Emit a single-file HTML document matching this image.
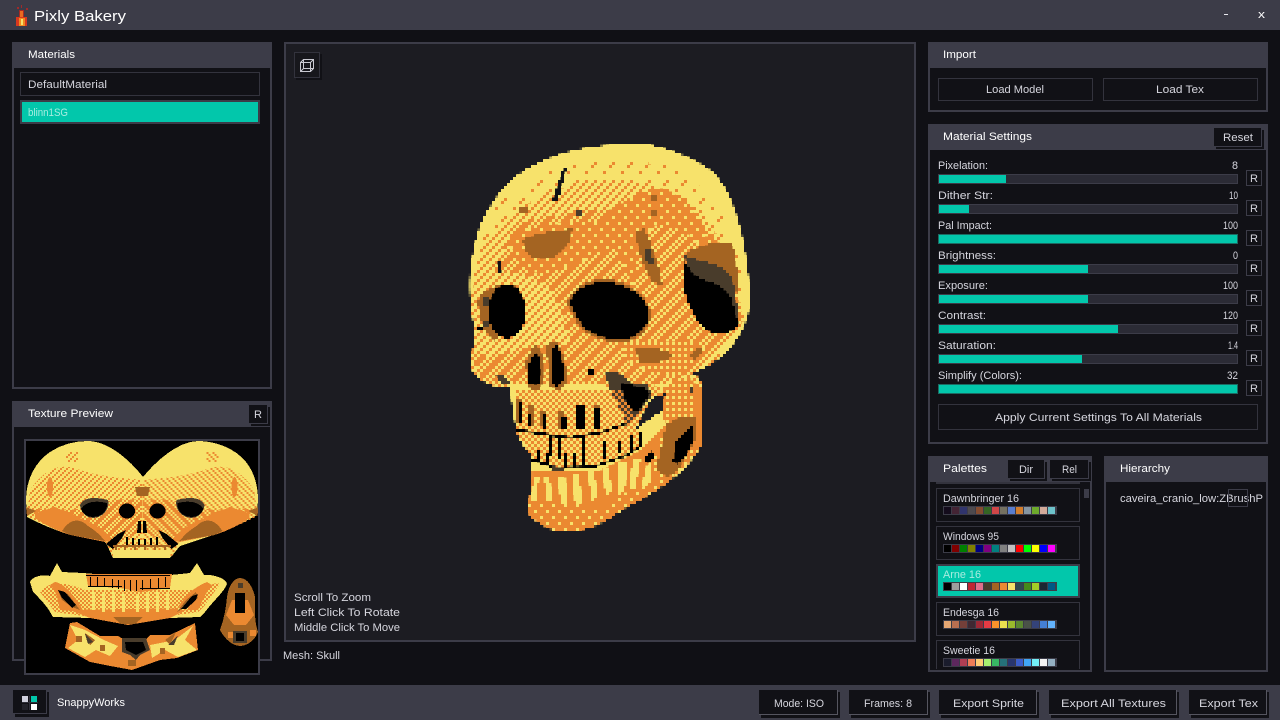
<!DOCTYPE html>
<html><head><meta charset="utf-8"><title>Pixly Bakery</title>
<style>
html,body{margin:0;padding:0;background:#101015;width:1280px;height:720px;overflow:hidden}
svg{display:block}
text{font-family:"Liberation Sans",sans-serif;font-size:11px;fill:#d6d6de}
.h{fill:#fff}
rect{shape-rendering:crispEdges}
.sk path,.sk polygon,.sk ellipse{shape-rendering:crispEdges}
</style></head><body>
<svg width="1280" height="720" viewBox="0 0 1280 720" xmlns="http://www.w3.org/2000/svg">
<defs>
<filter id="px" filterUnits="userSpaceOnUse" x="459" y="129" width="300" height="411" color-interpolation-filters="sRGB">
<feFlood x="460" y="130" width="1" height="1" flood-color="#000"/>
<feComposite x="459" y="129" width="3" height="3"/>
<feTile x="459" y="129" width="300" height="411" result="a"/>
<feComposite in="SourceGraphic" in2="a" operator="in"/>
<feMorphology operator="dilate" radius="1"/>
</filter>
<pattern id="p0" width="18" height="18" patternUnits="userSpaceOnUse"><rect width="3" height="3" fill="#eb8931"/><rect x="9" y="9" width="3" height="3" fill="#eb8931"/><rect x="15" y="3" width="3" height="3" fill="#eb8931"/></pattern>
<pattern id="p1" width="9" height="9" patternUnits="userSpaceOnUse"><rect width="3" height="3" fill="#eb8931"/><rect x="6" y="3" width="3" height="3" fill="#eb8931"/><rect x="3" y="6" width="3" height="3" fill="#eb8931"/></pattern>
<pattern id="p2" width="6" height="6" patternUnits="userSpaceOnUse"><rect width="3" height="3" fill="#eb8931"/><rect x="3" y="3" width="3" height="3" fill="#eb8931"/></pattern>
<pattern id="p3" width="6" height="6" patternUnits="userSpaceOnUse"><rect width="6" height="6" fill="#eb8931"/><rect width="3" height="3" fill="#f7e26b"/></pattern>
<pattern id="p4" width="12" height="12" patternUnits="userSpaceOnUse"><rect width="12" height="12" fill="#eb8931"/><rect width="3" height="3" fill="#f7e26b"/><rect x="6" y="6" width="3" height="3" fill="#f7e26b"/></pattern>
<pattern id="t2" width="4" height="4" patternUnits="userSpaceOnUse"><rect width="2" height="2" fill="#eb8931"/><rect x="2" y="2" width="2" height="2" fill="#eb8931"/></pattern>
<pattern id="t1" width="6" height="6" patternUnits="userSpaceOnUse"><rect width="2" height="2" fill="#eb8931"/><rect x="4" y="2" width="2" height="2" fill="#eb8931"/><rect x="2" y="4" width="2" height="2" fill="#eb8931"/></pattern>
<clipPath id="skc"><path d="M640,143 C660,146 690,155 710,170 C725,182 735,205 742,235 C748,265 752,295 748,315 C740,340 725,358 700,370 C692,373 685,377 679,382 L688,376 C695,372 702,378 703,390 L703,440 C698,456 682,472 667,483 C650,495 640,500 627,507 C610,518 600,525 590,528 C575,532 560,532 553,530 C540,525 530,518 527,510 C530,495 533,480 532,470 L530,453 C522,445 518,438 517,433 L513,413 L510,388 C495,388 482,384 472,370 C468,362 475,345 475,330 C470,310 468,285 471,265 C475,240 480,220 490,207 C500,190 512,178 525,170 C550,155 580,147 610,145 Z"/></clipPath>
<clipPath id="tc"><rect x="26" y="441" width="232" height="232"/></clipPath>
<clipPath id="palc"><rect x="930" y="482" width="160" height="187"/></clipPath>
</defs>

<!-- title bar -->
<rect width="1280" height="720" fill="#101015"/>
<rect width="1280" height="30" fill="#3c3c48"/>
<rect x="19" y="10" width="5" height="7" fill="#a82a22"/><rect x="20" y="11" width="3" height="6" fill="#e86a20"/>
<rect x="16" y="17" width="11" height="9" fill="#d8381e"/><rect x="19" y="18" width="6" height="8" fill="#f08a20"/><rect x="21" y="19" width="2" height="6" fill="#f7e26b"/>
<rect x="17" y="7" width="2" height="2" fill="#a02a2a"/><rect x="21" y="5" width="1" height="3" fill="#a02a2a"/><rect x="26" y="8" width="2" height="2" fill="#a02a2a"/>
<text x="34" y="21" class="h" style="font-size:15px" textLength="92" lengthAdjust="spacingAndGlyphs">Pixly Bakery</text>
<rect x="1224" y="14" width="4" height="1" fill="#e8e8ee"/>
<text x="1258" y="18" class="h" textLength="7" lengthAdjust="spacingAndGlyphs">x</text>

<!-- Materials -->
<rect x="12" y="42" width="260" height="347" fill="#3c3c48"/><rect x="14" y="68" width="256" height="319" fill="#111116"/>
<text x="28" y="58" class="h" textLength="47" lengthAdjust="spacingAndGlyphs">Materials</text>
<rect x="20" y="72" width="240" height="24" fill="#33333d"/><rect x="21" y="73" width="238" height="22" fill="#111116"/>
<text x="28" y="88" textLength="79" lengthAdjust="spacingAndGlyphs">DefaultMaterial</text>
<rect x="20" y="100" width="240" height="24" fill="#3c3c48"/><rect x="22" y="102" width="236" height="20" fill="#02c7ab"/>
<text x="28" y="116" style="fill:#a8ece0" textLength="40" lengthAdjust="spacingAndGlyphs">blinn1SG</text>

<!-- Texture Preview panel -->
<rect x="12" y="401" width="260" height="260" fill="#3c3c48"/><rect x="14" y="427" width="256" height="232" fill="#111116"/>
<text x="28" y="417" class="h" textLength="85" lengthAdjust="spacingAndGlyphs">Texture Preview</text>
<rect x="251" y="407" width="19" height="19" fill="#111116"/><rect x="249" y="405" width="19" height="19" fill="#111116"/><rect x="267" y="405" width="1" height="19" fill="#3c3c48"/><rect x="249" y="423" width="19" height="1" fill="#3c3c48"/>
<text x="254" y="418" textLength="8" lengthAdjust="spacingAndGlyphs">R</text>
<rect x="24" y="439" width="236" height="236" fill="#3c3c48"/><rect x="26" y="441" width="232" height="232" fill="#000"/>
<g class="sk" clip-path="url(#tc)">
<path d="M26,500 C26,480 35,462 50,452 C62,444 75,441 88,441 C108,441 130,460 143,477 C155,462 178,441 198,441 C215,441 235,448 246,462 C254,472 258,485 258,500 L257,515 C240,525 225,530 213,535 L180,546 C175,552 172,556 170,558 L113,558 C110,552 108,546 105,542 L70,535 C55,530 40,524 27,517 Z" fill="#f7e26b"/>
<g id="tl">
<path d="M30,490 C45,468 62,462 80,470 C105,478 125,478 142,480 L142,558 L113,558 L105,542 L70,535 L27,517Z M66,452h12v10h-12z" fill="url(#t1)"/>
<path d="M30,510 C50,505 70,515 90,505 C110,500 125,498 142,500 L142,530 L113,546 L105,542 L70,535Z" fill="url(#t2)"/>
<ellipse cx="50" cy="487" rx="3" ry="10" fill="#eb8931"/>
<path d="M35,514 C50,505 65,508 80,518 C95,524 105,530 113,540 L105,542 L70,535 C55,530 45,525 35,518Z" fill="#eb8931"/>
<path d="M62,531 C70,518 80,518 88,526 C95,530 100,535 105,541 L70,535Z" fill="#a46422"/>
<ellipse cx="54" cy="512" rx="6" ry="5" fill="#eb8931"/>
<path d="M26,507 L36,511 L27,516Z" fill="#a46422"/>
<path d="M80,505 C83,498 92,496 108,500 C110,508 104,517 94,518 C87,518 81,514 80,505Z" fill="#493c2b"/>
<path d="M81,509 C85,502 95,500 107,503 C108,510 102,517 93,517 C87,517 83,514 81,509Z" fill="#000"/>
<ellipse cx="127" cy="511" rx="9" ry="8" fill="#eb8931"/>
<ellipse cx="127" cy="511" rx="8" ry="7.5" fill="#000"/>
<path d="M106,544 L118,534 L126,530 L122,538 L113,549Z" fill="#000"/>
</g>
<use href="#tl" transform="translate(284.5) scale(-1,1)"/>
<path d="M135,487 L150,487 L148,496 L137,496Z" fill="#a46422"/>
<path d="M138,521 L141,521 L141,533 L137,533Z M143,521 L146,521 L147,533 L143,533Z" fill="#000"/>
<path d="M126,537h2v8h-2zM132,538h2v7h-2zM138,539h2v6h-2zM144,539h2v6h-2zM150,538h2v7h-2zM156,537h2v8h-2z" fill="#000"/>
<path d="M113,545h58v2h-58zM115,547h2v3h-2zM124,547h2v3h-2zM134,547h2v3h-2zM144,547h2v3h-2zM154,547h2v3h-2zM164,547h2v3h-2z" fill="#a46422"/>
<path d="M113,550 L171,550 L170,558 L113,558Z" fill="#f7e26b"/>
<!-- mandible -->
<path d="M30,582 C32,576 45,574 50,576 L57,563 L62,572 L83,573 L142,578 L190,573 L197,563 L204,575 C212,574 226,578 227,584 C224,592 214,600 205,612 L200,617 L170,618 L128,625 L90,618 L53,617 C47,605 38,597 33,592Z" fill="#f7e26b"/>
<path d="M40,592 C50,580 65,582 85,590 L200,590 C210,585 215,582 220,584 L205,605 L198,612 L128,622 L55,612Z" fill="url(#t2)"/>
<path d="M55,582 C60,582 72,590 84,612 L60,610 C58,600 56,590 50,585Z M207,582 C200,585 188,590 176,610 L198,610 C203,600 207,590 212,585Z M70,610 L190,608 L170,618 L128,625 L90,618Z" fill="#eb8931"/>
<path d="M58,590 L68,594 L80,610 L72,607 L62,600Z M196,592 L186,600 L177,612 L188,606 L198,598Z M113,617h30l-8,7h-14z" fill="#a46422"/>
<path d="M58,590 L65,592 L76,605 L72,608 L62,598Z M198,594 L192,596 L181,609 L186,609 L196,600Z" fill="#000"/>
<path d="M86,574 L172,574 L170,588 L140,592 L120,588 L88,586Z" fill="#eb8931"/>
<path d="M86,575h84v1h-84zM88,586h34v1h-34zM140,588h30v1h-30zM90,577h1v9h-1zM97,577h1v9h-1zM104,578h1v9h-1zM112,579h1v9h-1zM118,580h1v9h-1zM124,580h1v11h-1zM130,580h1v11h-1zM136,580h1v11h-1zM142,580h1v10h-1zM150,579h1v10h-1zM158,578h1v10h-1zM165,577h1v10h-1z" fill="#000"/>
<path d="M92,592h3v18h-3zM102,592h3v20h-3zM112,592h3v20h-3zM122,594h3v18h-3zM136,594h3v18h-3zM146,592h3v20h-3zM156,592h3v20h-3zM166,592h3v18h-3z" fill="#f7e26b"/>
<!-- lower piece -->
<path d="M70,623 L77,622 L100,636 L118,636 L125,640 L145,640 L150,635 L170,635 L195,623 L198,650 L177,658 L160,660 L132,670 L105,665 L90,662 L65,648Z" fill="#eb8931"/>
<path d="M70,625 L78,640 L68,648 L85,657 L96,650 L110,656 L118,646 L104,640 L85,630Z M193,626 L185,640 L197,650 L178,657 L165,650 L152,658 L150,645 L175,640Z" fill="#f7e26b"/>
<path d="M122,638 L146,638 L150,650 L140,655 L136,660 L130,655 L122,652Z" fill="#493c2b"/>
<path d="M125,642 L143,642 L146,650 L136,655 L126,650Z" fill="#000"/>
<path d="M85,633 L95,640 L90,645Z M176,632 L165,640 L170,645Z M76,636h6v6h-6zM100,645h5v6h-5zM160,648h5v6h-5zM128,660h8v6h-8z" fill="#a46422"/>
<path d="M85,634 L93,642 L88,644Z M178,635 L168,645 L174,645Z" fill="#493c2b"/>
<!-- oval -->
<path d="M240,578 C248,578 253,588 255,597 C255,610 254,620 258,632 C254,642 246,646 240,646 C232,646 224,638 220,630 C224,620 226,607 227,597 C228,588 233,578 240,578Z" fill="#a46422"/>
<path d="M232,600 L248,600 L254,615 L246,625 L234,625 L226,615Z M228,632h6v6h-6zM250,630h6v6h-6z" fill="#eb8931"/>
<rect x="235" y="593" width="10" height="20" fill="#000"/><rect x="233" y="631" width="14" height="12" fill="#493c2b"/><rect x="236" y="633" width="8" height="8" fill="#000"/><rect x="238" y="583" width="5" height="5" fill="#493c2b"/>
</g>

<!-- Viewport -->
<rect x="284" y="42" width="632" height="600" fill="#3c3c48"/><rect x="286" y="44" width="628" height="596" fill="#1c1c22"/>
<rect x="296" y="54" width="26" height="26" fill="#111116"/><rect x="294" y="52" width="26" height="26" fill="#33333d"/><rect x="295" y="53" width="24" height="24" fill="#17171c"/>
<g fill="none" stroke="#c8c8d0" stroke-width="1"><rect x="300.5" y="62.5" width="10" height="9"/><rect x="303.5" y="59.5" width="10" height="9"/><path d="M300.5,62.5 L303.5,59.5 M310.5,62.5 L313.5,59.5 M310.5,71.5 L313.5,68.5 M300.5,71.5 L303.5,68.5" shape-rendering="crispEdges"/></g>

<!-- Skull -->
<g filter="url(#px)"><g class="sk"><g clip-path="url(#skc)">
<rect x="459" y="129" width="300" height="411" fill="#f7e26b"/>
<path d="M490,215 C510,190 540,170 580,165 C620,158 670,160 695,180 C715,195 730,225 740,260 L746,320 L700,385 L470,380 L468,300Z" fill="url(#p0)"/>
<path d="M480,250 C500,215 540,190 590,180 C640,175 690,190 712,225 C725,250 735,280 742,320 L700,385 L470,380 L470,300Z" fill="url(#p1)"/>
<path d="M515,225 C540,215 580,212 640,205 L690,215 L725,250 L745,320 L700,370 L660,385 L510,385 L485,370 C490,350 530,345 570,345 C560,300 550,280 520,275 L495,270Z" fill="url(#p2)"/>
<path d="M510,240 C530,222 570,222 598,222 C615,205 640,188 665,188 C685,195 700,215 705,235 C720,238 733,250 738,290 C720,255 690,232 665,225 C650,225 640,232 632,290 C625,265 620,250 610,248 C590,255 575,268 550,272 C530,275 510,262 510,240Z" fill="url(#p4)"/>
<path d="M523,240 C535,232 555,232 572,228 C572,240 568,250 552,258 C540,262 522,258 523,240Z" fill="#a46422"/>
<path d="M636,232 L644,228 C652,245 660,265 662,285 L652,282 C645,270 637,250 636,232Z" fill="#a46422"/><rect x="644" y="248" width="6" height="12" fill="#493c2b"/><rect x="648" y="258" width="6" height="6" fill="#493c2b"/>
<rect x="519" y="207" width="9" height="6" fill="#a46422"/><rect x="576" y="210" width="6" height="6" fill="#493c2b"/><rect x="650" y="195" width="6" height="6" fill="#a46422"/><rect x="650" y="210" width="6" height="6" fill="#a46422"/>
<path d="M552,200 L563,168 L567,168 L558,200Z" fill="#111116"/>
<!-- right temple -->
<path d="M684,255 C695,245 725,238 733,245 C738,262 737,275 738,295 C725,270 700,265 684,260Z" fill="#a46422"/>
<path d="M683,255 C700,262 725,262 733,280 L740,325 L730,300 C725,290 705,282 695,280Z" fill="#493c2b"/>
<path d="M683,258 C688,268 695,278 705,280 C718,283 727,288 732,300 L739,326 C730,335 715,336 706,330 C695,322 686,300 683,285 Z" fill="#000"/>
<!-- left orbit -->
<path d="M478,300 C485,285 505,282 520,287 L495,342 C485,335 478,320 478,300Z" fill="#a46422"/>
<rect x="484" y="296" width="6" height="9" fill="#493c2b"/><rect x="482" y="320" width="6" height="8" fill="#493c2b"/>
<ellipse cx="507" cy="311" rx="19" ry="27" fill="#000"/>
<rect x="476" y="326" width="8" height="3" fill="#000"/>
<path d="M496,260 L501,260 L503,274 L498,274Z" fill="#111116"/>
<!-- centre orbit -->
<path d="M566,303 C572,288 585,279 605,279 C625,280 645,292 651,311 C652,328 640,338 628,342 C610,344 590,338 580,328 Z" fill="#a46422"/>
<path d="M569,303 C575,290 585,282 605,282 C625,283 645,295 649,311 C650,325 640,335 628,339 C610,342 590,335 582,325 Z" fill="#000"/>
<!-- lower cranium -->
<path d="M625,342 L690,340 L705,350 L680,375 L650,372 L625,360Z" fill="url(#p3)"/>
<path d="M634,348 C645,346 660,348 673,354 C668,362 655,364 640,362Z" fill="#a46422"/>
<path d="M690,355 L698,347 L703,350 L695,362Z" fill="#a46422"/>
<path d="M472,352 L482,352 L508,372 L510,388 L482,384Z" fill="url(#p2)"/>
<path d="M496,376 L503,374 L510,384 L503,386Z" fill="#493c2b"/>
<!-- nose -->
<path d="M526,362 C528,352 535,344 538,346 C544,352 546,368 544,380 L540,390 L527,388Z" fill="#a46422"/>
<path d="M546,345 L556,340 C562,348 568,366 567,382 L560,390 L550,388Z" fill="#a46422"/>
<path d="M527,372 C529,360 534,352 537,352 C541,358 542,370 541,380 L537,386 L528,384Z" fill="#000"/>
<path d="M551,352 L556,345 C561,352 565,366 564,380 L558,387 L552,384Z" fill="#000"/>
<rect x="588" y="370" width="6" height="6" fill="#000"/>
<!-- cheek cavity -->
<path d="M603,373 L630,375 L672,392 L660,410 L640,428 L628,430 L615,420 L607,395Z" fill="url(#p2)"/>
<path d="M604,372 L618,372 L630,382 L648,385 L652,395 L640,412 L628,428 L622,412 L612,395Z" fill="#493c2b"/>
<path d="M620,382 L645,388 L650,394 L638,412 L630,410 L624,398Z" fill="#000"/>
<!-- teeth area -->
<path d="M515,390 L620,390 L640,425 L640,445 L627,455 L593,467 L557,468 L532,458 L517,433Z" fill="url(#p2)"/>
<path d="M517,400h6v22h-6zM527,405h6v22h-6zM541,410h6v17h-6zM559,410h6v20h-6zM575,405h9v23h-9zM594,405h6v23h-6z" fill="#a46422"/>
<path d="M518,402h4v20h-4zM528,413h4v14h-4zM543,414h3v14h-3zM561,418h5v12h-5zM576,406h8v22h-8zM595,408h5v20h-5z" fill="#000"/>
<polyline points="517,430 537,433 570,438 603,432 627,423" fill="none" stroke="#000" stroke-width="2.5"/>
<polyline points="532,460 557,468 593,467 627,455 642,445" fill="none" stroke="#000" stroke-width="2.5"/>
<path d="M548,434h3v22h-3zM558,436h3v23h-3zM582,436h3v30h-3zM602,440h3v20h-3zM618,442h3v12h-3zM630,436h3v17h-3zM640,432h3v13h-3zM537,450h3v12h-3zM547,452h3v12h-3zM564,453h3v14h-3zM573,454h3v13h-3z" fill="#000"/>
<path d="M552,465 L566,469 L557,477 L550,472Z" fill="#493c2b"/>
<!-- jaw -->
<path d="M527,470 L560,472 L600,470 L640,450 L665,425 L703,385 L706,445 L660,490 L620,512 L590,530 L550,532 L525,512Z" fill="#eb8931"/>
<path d="M534,478 L539,478 L536,500 L531,500Z M544,476h5l4,26h-6z M558,476h7l3,30h-7z M573,474h6l3,28 l-7,4z M588,472h6l4,24 l-6,6z M602,468h6l4,22 l-6,6z M618,462h9l-2,28 l-8,6z M633,458h8l-6,30 l-6,3z M645,468 L650,463 L652,482 L642,488Z" fill="#f7e26b"/>
<path d="M528,505 L560,503 L600,508 L620,495 L640,490 L665,470 L667,483 L620,512 L590,530 L550,532Z" fill="url(#p4)"/>
<!-- ramus -->
<path d="M660,390 L688,376 L703,390 L703,443 L690,462 L665,482 L650,470 L665,425Z" fill="url(#p3)"/>
<path d="M690,378 L703,390 L703,440 L696,452 L695,430 L694,395Z" fill="url(#p2)"/>
<path d="M666,425 L680,416 L695,418 L695,440 L680,468 L668,478 L656,470Z" fill="#a46422"/>
<path d="M674,448 C676,438 684,432 693,426 L693,440 C690,452 684,460 677,464 L673,462Z" fill="#000"/>
<path d="M644,460 L652,449 L654,458 L648,465Z" fill="#000"/>
<rect x="690" y="387" width="4" height="6" fill="#493c2b"/>
<!-- gap -->
<path d="M665,394 L663,410 L636,429 L643,413 L652,398Z" fill="#1c1c22"/>
</g></g></g>

<text x="294" y="601" textLength="77" lengthAdjust="spacingAndGlyphs">Scroll To Zoom</text>
<text x="294" y="616" textLength="106" lengthAdjust="spacingAndGlyphs">Left Click To Rotate</text>
<text x="294" y="631" textLength="106" lengthAdjust="spacingAndGlyphs">Middle Click To Move</text>
<text x="283" y="659" textLength="57" lengthAdjust="spacingAndGlyphs">Mesh: Skull</text>

<!-- Import -->
<rect x="928" y="42" width="340" height="70" fill="#3c3c48"/><rect x="930" y="68" width="336" height="42" fill="#111116"/>
<text x="943" y="58" class="h" textLength="33" lengthAdjust="spacingAndGlyphs">Import</text>
<rect x="938" y="78" width="155" height="23" fill="#33333d"/><rect x="939" y="79" width="153" height="21" fill="#111116"/>
<rect x="1103" y="78" width="155" height="23" fill="#33333d"/><rect x="1104" y="79" width="153" height="21" fill="#111116"/>
<text x="986" y="93" textLength="58" lengthAdjust="spacingAndGlyphs">Load Model</text>
<text x="1156" y="93" textLength="48" lengthAdjust="spacingAndGlyphs">Load Tex</text>

<!-- Material Settings -->
<rect x="928" y="124" width="340" height="320" fill="#3c3c48"/><rect x="930" y="150" width="336" height="292" fill="#111116"/>
<text x="943" y="140" class="h" textLength="89" lengthAdjust="spacingAndGlyphs">Material Settings</text>
<rect x="1216" y="130" width="48" height="19" fill="#111116"/><rect x="1214" y="128" width="48" height="19" fill="#111116"/><rect x="1261" y="128" width="1" height="19" fill="#3c3c48"/><rect x="1214" y="146" width="48" height="1" fill="#3c3c48"/>
<text x="1223" y="141" textLength="30" lengthAdjust="spacingAndGlyphs">Reset</text>

<g id="sliders">
<text x="938" y="169" textLength="50" lengthAdjust="spacingAndGlyphs">Pixelation:</text><text x="1232" y="169" textLength="6" lengthAdjust="spacingAndGlyphs">8</text>
<rect x="938" y="174" width="300" height="10" fill="#3c3c48"/><rect x="939" y="175" width="298" height="8" fill="#2b2b35"/><rect x="939" y="175" width="67" height="8" fill="#02c7ab"/>
<rect x="1246" y="170" width="16" height="16" fill="#3c3c48"/><rect x="1247" y="171" width="14" height="14" fill="#111116"/><text x="1250" y="182" textLength="8" lengthAdjust="spacingAndGlyphs">R</text>

<text x="938" y="199" textLength="55" lengthAdjust="spacingAndGlyphs">Dither Str:</text><text x="1229" y="199" textLength="9" lengthAdjust="spacingAndGlyphs">10</text>
<rect x="938" y="204" width="300" height="10" fill="#3c3c48"/><rect x="939" y="205" width="298" height="8" fill="#2b2b35"/><rect x="939" y="205" width="30" height="8" fill="#02c7ab"/>
<rect x="1246" y="200" width="16" height="16" fill="#3c3c48"/><rect x="1247" y="201" width="14" height="14" fill="#111116"/><text x="1250" y="212" textLength="8" lengthAdjust="spacingAndGlyphs">R</text>

<text x="938" y="229" textLength="54" lengthAdjust="spacingAndGlyphs">Pal Impact:</text><text x="1223" y="229" textLength="15" lengthAdjust="spacingAndGlyphs">100</text>
<rect x="938" y="234" width="300" height="10" fill="#1d6a62"/><rect x="939" y="235" width="298" height="8" fill="#2b2b35"/><rect x="939" y="235" width="298" height="8" fill="#02c7ab"/>
<rect x="1246" y="230" width="16" height="16" fill="#3c3c48"/><rect x="1247" y="231" width="14" height="14" fill="#111116"/><text x="1250" y="242" textLength="8" lengthAdjust="spacingAndGlyphs">R</text>

<text x="938" y="259" textLength="58" lengthAdjust="spacingAndGlyphs">Brightness:</text><text x="1233" y="259" textLength="5" lengthAdjust="spacingAndGlyphs">0</text>
<rect x="938" y="264" width="300" height="10" fill="#3c3c48"/><rect x="939" y="265" width="298" height="8" fill="#2b2b35"/><rect x="939" y="265" width="149" height="8" fill="#02c7ab"/>
<rect x="1246" y="260" width="16" height="16" fill="#3c3c48"/><rect x="1247" y="261" width="14" height="14" fill="#111116"/><text x="1250" y="272" textLength="8" lengthAdjust="spacingAndGlyphs">R</text>

<text x="938" y="289" textLength="50" lengthAdjust="spacingAndGlyphs">Exposure:</text><text x="1223" y="289" textLength="15" lengthAdjust="spacingAndGlyphs">100</text>
<rect x="938" y="294" width="300" height="10" fill="#3c3c48"/><rect x="939" y="295" width="298" height="8" fill="#2b2b35"/><rect x="939" y="295" width="149" height="8" fill="#02c7ab"/>
<rect x="1246" y="290" width="16" height="16" fill="#3c3c48"/><rect x="1247" y="291" width="14" height="14" fill="#111116"/><text x="1250" y="302" textLength="8" lengthAdjust="spacingAndGlyphs">R</text>

<text x="938" y="319" textLength="48" lengthAdjust="spacingAndGlyphs">Contrast:</text><text x="1223" y="319" textLength="15" lengthAdjust="spacingAndGlyphs">120</text>
<rect x="938" y="324" width="300" height="10" fill="#3c3c48"/><rect x="939" y="325" width="298" height="8" fill="#2b2b35"/><rect x="939" y="325" width="179" height="8" fill="#02c7ab"/>
<rect x="1246" y="320" width="16" height="16" fill="#3c3c48"/><rect x="1247" y="321" width="14" height="14" fill="#111116"/><text x="1250" y="332" textLength="8" lengthAdjust="spacingAndGlyphs">R</text>

<text x="938" y="349" textLength="58" lengthAdjust="spacingAndGlyphs">Saturation:</text><text x="1228" y="349" textLength="10" lengthAdjust="spacingAndGlyphs">1.4</text>
<rect x="938" y="354" width="300" height="10" fill="#3c3c48"/><rect x="939" y="355" width="298" height="8" fill="#2b2b35"/><rect x="939" y="355" width="143" height="8" fill="#02c7ab"/>
<rect x="1246" y="350" width="16" height="16" fill="#3c3c48"/><rect x="1247" y="351" width="14" height="14" fill="#111116"/><text x="1250" y="362" textLength="8" lengthAdjust="spacingAndGlyphs">R</text>

<text x="938" y="379" textLength="84" lengthAdjust="spacingAndGlyphs">Simplify (Colors):</text><text x="1227" y="379" textLength="11" lengthAdjust="spacingAndGlyphs">32</text>
<rect x="938" y="384" width="300" height="10" fill="#1d6a62"/><rect x="939" y="385" width="298" height="8" fill="#02c7ab"/>
<rect x="1246" y="380" width="16" height="16" fill="#3c3c48"/><rect x="1247" y="381" width="14" height="14" fill="#111116"/><text x="1250" y="392" textLength="8" lengthAdjust="spacingAndGlyphs">R</text>
</g>
<rect x="938" y="404" width="320" height="26" fill="#33333d"/><rect x="939" y="405" width="318" height="24" fill="#111116"/>
<text x="995" y="421" textLength="207" lengthAdjust="spacingAndGlyphs">Apply Current Settings To All Materials</text>

<!-- Palettes -->
<rect x="928" y="456" width="164" height="216" fill="#3c3c48"/><rect x="930" y="482" width="160" height="188" fill="#111116"/>
<text x="943" y="472" class="h" textLength="44" lengthAdjust="spacingAndGlyphs">Palettes</text>
<rect x="1010" y="462" width="37" height="19" fill="#111116"/><rect x="1008" y="460" width="37" height="19" fill="#111116"/><rect x="1044" y="460" width="1" height="19" fill="#3c3c48"/><rect x="1008" y="478" width="37" height="1" fill="#3c3c48"/>
<text x="1019" y="473" textLength="14" lengthAdjust="spacingAndGlyphs">Dir</text>
<rect x="1052" y="462" width="39" height="19" fill="#111116"/><rect x="1050" y="460" width="39" height="19" fill="#111116"/><rect x="1088" y="460" width="1" height="19" fill="#3c3c48"/><rect x="1050" y="478" width="39" height="1" fill="#3c3c48"/>
<text x="1062" y="473" textLength="15" lengthAdjust="spacingAndGlyphs">Rel</text>
<rect x="1084" y="489" width="5" height="9" fill="#3c3c48"/>
<g clip-path="url(#palc)">
<rect x="936" y="482" width="144" height="2" fill="#33333d"/>
<!-- item 1 -->
<rect x="936" y="488" width="144" height="34" fill="#33333d"/><rect x="937" y="489" width="142" height="32" fill="#111116"/>
<text x="943" y="502" textLength="76" lengthAdjust="spacingAndGlyphs">Dawnbringer 16</text>
<rect x="943" y="506" width="114" height="9" fill="#3c3c48"/>
<rect x="944" y="507" width="7" height="7" fill="#140c1c"/><rect x="952" y="507" width="7" height="7" fill="#442434"/><rect x="960" y="507" width="7" height="7" fill="#30346d"/><rect x="968" y="507" width="7" height="7" fill="#4e4a4e"/><rect x="976" y="507" width="7" height="7" fill="#854c30"/><rect x="984" y="507" width="7" height="7" fill="#346524"/><rect x="992" y="507" width="7" height="7" fill="#d04648"/><rect x="1000" y="507" width="7" height="7" fill="#757161"/><rect x="1008" y="507" width="7" height="7" fill="#597dce"/><rect x="1016" y="507" width="7" height="7" fill="#d27d2c"/><rect x="1024" y="507" width="7" height="7" fill="#8595a1"/><rect x="1032" y="507" width="7" height="7" fill="#6daa2c"/><rect x="1040" y="507" width="7" height="7" fill="#d2aa99"/><rect x="1048" y="507" width="7" height="7" fill="#6dc2ca"/>
<!-- item 2 -->
<rect x="936" y="526" width="144" height="34" fill="#33333d"/><rect x="937" y="527" width="142" height="32" fill="#111116"/>
<text x="943" y="540" textLength="56" lengthAdjust="spacingAndGlyphs">Windows 95</text>
<rect x="943" y="544" width="114" height="9" fill="#3c3c48"/>
<rect x="944" y="545" width="7" height="7" fill="#000"/><rect x="952" y="545" width="7" height="7" fill="#800000"/><rect x="960" y="545" width="7" height="7" fill="#008000"/><rect x="968" y="545" width="7" height="7" fill="#808000"/><rect x="976" y="545" width="7" height="7" fill="#000080"/><rect x="984" y="545" width="7" height="7" fill="#800080"/><rect x="992" y="545" width="7" height="7" fill="#008080"/><rect x="1000" y="545" width="7" height="7" fill="#808080"/><rect x="1008" y="545" width="7" height="7" fill="#c0c0c0"/><rect x="1016" y="545" width="7" height="7" fill="#f00"/><rect x="1024" y="545" width="7" height="7" fill="#0f0"/><rect x="1032" y="545" width="7" height="7" fill="#ff0"/><rect x="1040" y="545" width="7" height="7" fill="#00f"/><rect x="1048" y="545" width="7" height="7" fill="#f0f"/>
<!-- item 3 -->
<rect x="936" y="564" width="144" height="34" fill="#3c3c48"/><rect x="938" y="566" width="140" height="30" fill="#02c7ab"/>
<text x="943" y="578" style="fill:#a8ece0" textLength="38" lengthAdjust="spacingAndGlyphs">Arne 16</text>
<rect x="943" y="582" width="114" height="9" fill="#3c3c48"/>
<rect x="944" y="583" width="7" height="7" fill="#000"/><rect x="952" y="583" width="7" height="7" fill="#9d9d9d"/><rect x="960" y="583" width="7" height="7" fill="#fff"/><rect x="968" y="583" width="7" height="7" fill="#be2633"/><rect x="976" y="583" width="7" height="7" fill="#e06f8b"/><rect x="984" y="583" width="7" height="7" fill="#493c2b"/><rect x="992" y="583" width="7" height="7" fill="#a46422"/><rect x="1000" y="583" width="7" height="7" fill="#eb8931"/><rect x="1008" y="583" width="7" height="7" fill="#f7e26b"/><rect x="1016" y="583" width="7" height="7" fill="#2f484e"/><rect x="1024" y="583" width="7" height="7" fill="#44891a"/><rect x="1032" y="583" width="7" height="7" fill="#a3ce27"/><rect x="1040" y="583" width="7" height="7" fill="#1b2632"/><rect x="1048" y="583" width="7" height="7" fill="#005784"/>
<!-- item 4 -->
<rect x="936" y="602" width="144" height="34" fill="#33333d"/><rect x="937" y="603" width="142" height="32" fill="#111116"/>
<text x="943" y="616" textLength="56" lengthAdjust="spacingAndGlyphs">Endesga 16</text>
<rect x="943" y="620" width="114" height="9" fill="#3c3c48"/>
<rect x="944" y="621" width="7" height="7" fill="#e4a672"/><rect x="952" y="621" width="7" height="7" fill="#b86f50"/><rect x="960" y="621" width="7" height="7" fill="#743f39"/><rect x="968" y="621" width="7" height="7" fill="#3f2832"/><rect x="976" y="621" width="7" height="7" fill="#9e2835"/><rect x="984" y="621" width="7" height="7" fill="#e53b44"/><rect x="992" y="621" width="7" height="7" fill="#fb922b"/><rect x="1000" y="621" width="7" height="7" fill="#ece04f"/><rect x="1008" y="621" width="7" height="7" fill="#9ab92c"/><rect x="1016" y="621" width="7" height="7" fill="#5b8730"/><rect x="1024" y="621" width="7" height="7" fill="#4a5248"/><rect x="1032" y="621" width="7" height="7" fill="#34437a"/><rect x="1040" y="621" width="7" height="7" fill="#447fd4"/><rect x="1048" y="621" width="7" height="7" fill="#62b2fb"/>
<!-- item 5 -->
<rect x="936" y="640" width="144" height="34" fill="#33333d"/><rect x="937" y="641" width="142" height="32" fill="#111116"/>
<text x="943" y="654" textLength="52" lengthAdjust="spacingAndGlyphs">Sweetie 16</text>
<rect x="943" y="658" width="114" height="9" fill="#3c3c48"/>
<rect x="944" y="659" width="7" height="7" fill="#1a1c2c"/><rect x="952" y="659" width="7" height="7" fill="#5d275d"/><rect x="960" y="659" width="7" height="7" fill="#b13e53"/><rect x="968" y="659" width="7" height="7" fill="#ef7d57"/><rect x="976" y="659" width="7" height="7" fill="#ffcd75"/><rect x="984" y="659" width="7" height="7" fill="#a7f070"/><rect x="992" y="659" width="7" height="7" fill="#38b764"/><rect x="1000" y="659" width="7" height="7" fill="#257179"/><rect x="1008" y="659" width="7" height="7" fill="#29366f"/><rect x="1016" y="659" width="7" height="7" fill="#3b5dc9"/><rect x="1024" y="659" width="7" height="7" fill="#41a6f6"/><rect x="1032" y="659" width="7" height="7" fill="#73eff7"/><rect x="1040" y="659" width="7" height="7" fill="#f4f4f4"/><rect x="1048" y="659" width="7" height="7" fill="#94b0c2"/>
</g>

<!-- Hierarchy -->
<rect x="1104" y="456" width="164" height="216" fill="#3c3c48"/><rect x="1106" y="482" width="160" height="188" fill="#111116"/>
<text x="1120" y="472" class="h" textLength="50" lengthAdjust="spacingAndGlyphs">Hierarchy</text>
<text x="1120" y="502" textLength="143" lengthAdjust="spacingAndGlyphs">caveira_cranio_low:ZBrushP</text>
<rect x="1228.5" y="489.5" width="19" height="17" fill="none" stroke="#3c3c48"/>

<!-- Bottom bar -->
<rect y="685" width="1280" height="35" fill="#3c3c48"/>
<rect x="15" y="692" width="34" height="25" fill="#111116"/><rect x="13" y="690" width="34" height="24" fill="#111116"/><rect x="46" y="690" width="1" height="24" fill="#3c3c48"/><rect x="13" y="713" width="34" height="1" fill="#3c3c48"/>
<rect x="22" y="696" width="6" height="6" fill="#d0d0dc"/><rect x="31" y="696" width="6" height="6" fill="#02c7ab"/><rect x="22" y="704" width="6" height="6" fill="#22222a"/><rect x="31" y="704" width="6" height="6" fill="#fff"/>
<rect x="22" y="702" width="16" height="1" fill="#2f2f39"/><rect x="29" y="696" width="1" height="14" fill="#2f2f39"/>
<text x="57" y="706" class="h" textLength="68" lengthAdjust="spacingAndGlyphs">SnappyWorks</text>

<rect x="761" y="692" width="79" height="26" fill="#111116"/><rect x="759" y="690" width="79" height="25" fill="#111116"/><rect x="837" y="690" width="1" height="25" fill="#55555f"/><rect x="759" y="714" width="79" height="1" fill="#55555f"/>
<text x="774" y="707" textLength="50" lengthAdjust="spacingAndGlyphs">Mode: ISO</text>
<rect x="851" y="692" width="79" height="26" fill="#111116"/><rect x="849" y="690" width="79" height="25" fill="#111116"/><rect x="927" y="690" width="1" height="25" fill="#55555f"/><rect x="849" y="714" width="79" height="1" fill="#55555f"/>
<text x="864" y="707" textLength="48" lengthAdjust="spacingAndGlyphs">Frames: 8</text>
<rect x="941" y="692" width="98" height="26" fill="#111116"/><rect x="939" y="690" width="98" height="25" fill="#111116"/><rect x="1036" y="690" width="1" height="25" fill="#55555f"/><rect x="939" y="714" width="98" height="1" fill="#55555f"/>
<text x="953" y="707" textLength="71" lengthAdjust="spacingAndGlyphs">Export Sprite</text>
<rect x="1051" y="692" width="128" height="26" fill="#111116"/><rect x="1049" y="690" width="128" height="25" fill="#111116"/><rect x="1176" y="690" width="1" height="25" fill="#55555f"/><rect x="1049" y="714" width="128" height="1" fill="#55555f"/>
<text x="1061" y="707" textLength="105" lengthAdjust="spacingAndGlyphs">Export All Textures</text>
<rect x="1191" y="692" width="78" height="26" fill="#111116"/><rect x="1189" y="690" width="78" height="25" fill="#111116"/><rect x="1266" y="690" width="1" height="25" fill="#55555f"/><rect x="1189" y="714" width="78" height="1" fill="#55555f"/>
<text x="1199" y="707" textLength="59" lengthAdjust="spacingAndGlyphs">Export Tex</text>
</svg>
</body></html>
